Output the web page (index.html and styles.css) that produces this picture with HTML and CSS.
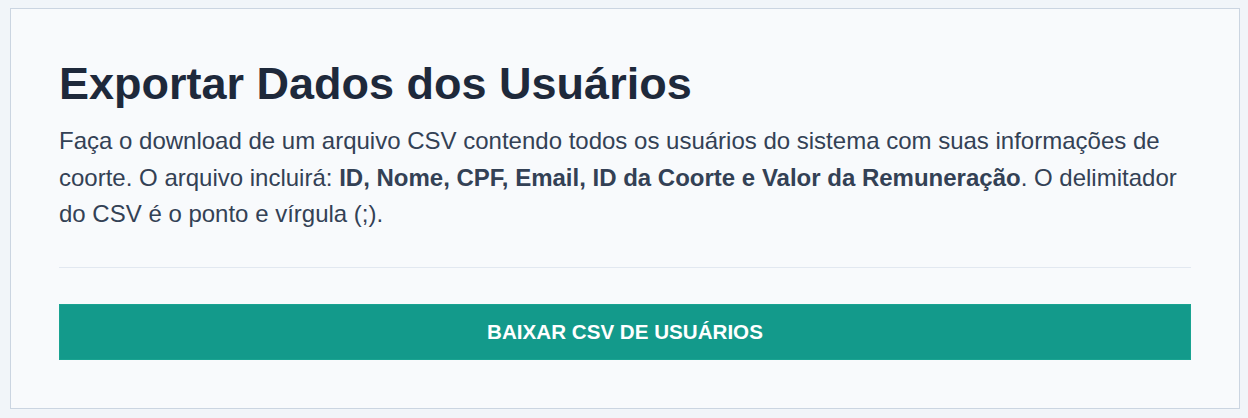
FILE: index.html
```html
<!DOCTYPE html>
<html lang="pt-BR">
<head>
<meta charset="utf-8">
<title>Exportar Dados dos Usuários</title>
<link rel="stylesheet" href="styles.css">
</head>
<body>
<section class="card">
  <h1 class="title">Exportar Dados dos Usuários</h1>
  <p class="desc">Faça o download de um arquivo CSV contendo todos os usuários do sistema com suas informações de coorte. O arquivo incluirá: <strong>ID, Nome, CPF, Email, ID da Coorte e Valor da Remuneração</strong>. O delimitador do CSV é o ponto e vírgula (;).</p>
  <hr class="divider">
  <button class="btn" type="button">Baixar CSV de Usuários</button>
</section>
</body>
</html>
```
FILE: styles.css
```css
html, body {
  margin: 0;
  padding: 0;
  background: #f1f5f9;
}
body {
  padding: 8px 8px 9px 10px;
  font-family: "Liberation Sans", Arial, sans-serif;
}
.card {
  background: #f8fafc;
  border: 1px solid #cbd5e1;
  padding: 48px;
}
.title {
  margin: 0;
  font-size: 45px;
  line-height: 54px;
  font-weight: 700;
  color: #1e293b;
}
.desc {
  margin: 12px 0 0;
  font-size: 24px;
  line-height: 36.5px;
  color: #334155;
}
.desc strong {
  font-weight: 700;
}
.divider {
  border: 0;
  border-top: 1px solid #e2e8f0;
  margin: 34px 0 36px;
}
.btn {
  display: block;
  width: 100%;
  height: 56px;
  background: #139a8b;
  border: 1px solid #1aa391;
  color: #ffffff;
  font-family: "Liberation Sans", Arial, sans-serif;
  font-size: 20.6px;
  font-weight: 700;
  text-transform: uppercase;
  cursor: pointer;
}
```
